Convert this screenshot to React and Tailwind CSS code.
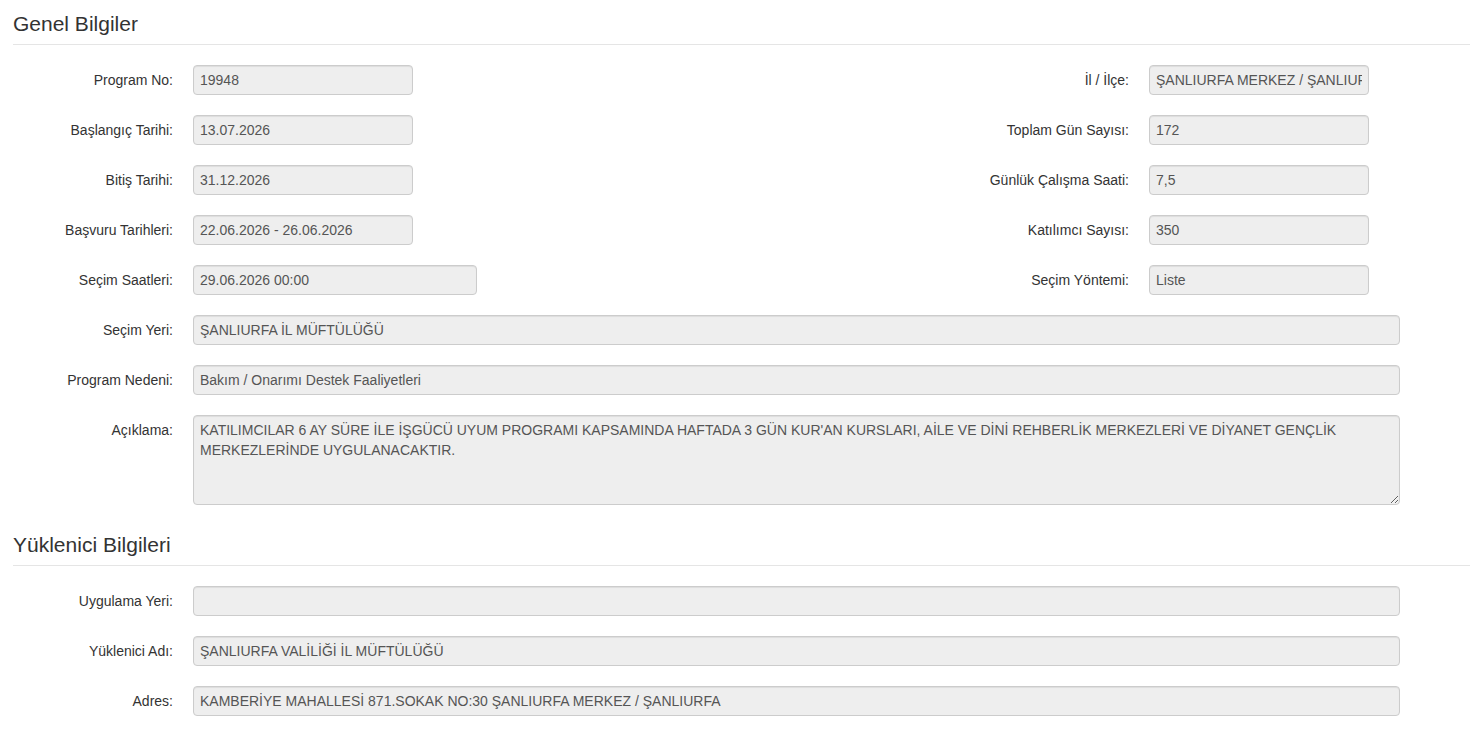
const genel = [
  [
    { label: 'Program No:', value: '19948' },
    { label: 'İl / İlçe:', value: 'ŞANLIURFA MERKEZ / ŞANLIURFA' },
  ],
  [
    { label: 'Başlangıç Tarihi:', value: '13.07.2026' },
    { label: 'Toplam Gün Sayısı:', value: '172' },
  ],
  [
    { label: 'Bitiş Tarihi:', value: '31.12.2026' },
    { label: 'Günlük Çalışma Saati:', value: '7,5' },
  ],
  [
    { label: 'Başvuru Tarihleri:', value: '22.06.2026 - 26.06.2026' },
    { label: 'Katılımcı Sayısı:', value: '350' },
  ],
  [
    { label: 'Seçim Saatleri:', value: '29.06.2026 00:00', wide: true },
    { label: 'Seçim Yöntemi:', value: 'Liste' },
  ],
];

const inputCls =
  'h-[30px] rounded-[4px] border border-[#ccc] bg-[#eee] px-[6px] text-[14px] text-[#555] shadow-[inset_0_1px_1px_rgba(0,0,0,0.075)] outline-none';

const Label = ({ children, className = 'w-[160px]' }) => (
  <div className={`${className} flex h-[30px] shrink-0 items-center justify-end text-[14px] text-[#333]`}>
    {children}
  </div>
);

const Heading = ({ children }) => (
  <div className="border-b border-[#e5e5e5] pb-[5px] pt-[9px] text-[21px] leading-[30px] text-[#333]">
    {children}
  </div>
);

const FullRow = ({ label, value }) => (
  <div className="mb-5 flex items-start gap-5">
    <Label>{label}</Label>
    <input readOnly value={value} className={`${inputCls} w-[1207px]`} />
  </div>
);

export default function App() {
  return (
    <div className="min-h-screen bg-white pl-[13px] font-['Liberation_Sans',Arial,sans-serif]">
      <Heading>Genel Bilgiler</Heading>
      <div className="pt-5">
        {genel.map(([l, r]) => (
          <div key={l.label} className="mb-5 flex items-start">
            <div className="flex w-[728px] items-start gap-5">
              <Label>{l.label}</Label>
              <input
                readOnly
                value={l.value}
                className={`${inputCls} ${l.wide ? 'w-[284px]' : 'w-[220px]'}`}
              />
            </div>
            <div className="flex items-start gap-5">
              <Label className="w-[388px]">{r.label}</Label>
              <input readOnly value={r.value} className={`${inputCls} w-[220px]`} />
            </div>
          </div>
        ))}
        <FullRow label="Seçim Yeri:" value="ŞANLIURFA İL MÜFTÜLÜĞÜ" />
        <FullRow label="Program Nedeni:" value="Bakım / Onarımı Destek Faaliyetleri" />
        <div className="flex items-start gap-5">
          <Label>Açıklama:</Label>
          <textarea
            readOnly
            value="KATILIMCILAR 6 AY SÜRE İLE İŞGÜCÜ UYUM PROGRAMI KAPSAMINDA HAFTADA 3 GÜN KUR'AN KURSLARI, AİLE VE DİNİ REHBERLİK MERKEZLERİ VE DİYANET GENÇLİK MERKEZLERİNDE UYGULANACAKTIR."
            className="h-[90px] w-[1207px] rounded-[4px] border border-[#ccc] bg-[#eee] px-[6px] pb-[5px] pt-[4px] text-[14px] leading-5 text-[#555] shadow-[inset_0_1px_1px_rgba(0,0,0,0.075)] outline-none"
          />
        </div>
      </div>

      <div className="mt-4">
        <Heading>Yüklenici Bilgileri</Heading>
      </div>
      <div className="pt-5">
        <FullRow label="Uygulama Yeri:" value="" />
        <FullRow label="Yüklenici Adı:" value="ŞANLIURFA VALİLİĞİ İL MÜFTÜLÜĞÜ" />
        <FullRow label="Adres:" value="KAMBERİYE MAHALLESİ 871.SOKAK NO:30 ŞANLIURFA MERKEZ / ŞANLIURFA" />
      </div>
    </div>
  );
}
